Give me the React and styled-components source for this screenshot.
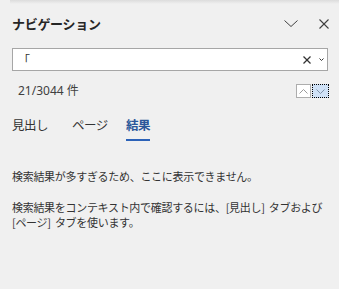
import React from "react";
import styled, { createGlobalStyle } from "styled-components";

const Global = createGlobalStyle`
  html, body { margin: 0; padding: 0; background: #f0f0f0; }
  body { font-family: "Noto Sans", "Noto Sans CJK JP", sans-serif; color: #262626; }
  * { box-sizing: border-box; }
`;

const Pane = styled.div`
  width: 339px;
  height: 289px;
  background: #f0f0f0;
  display: flex;
  flex-direction: column;
  overflow: hidden;
`;

const TopShadow = styled.div`
  height: 4px;
  margin-left: 10px;
  background: linear-gradient(#dcdcdc, #f0f0f0);
`;

const Header = styled.div`
  height: 39px;
  display: flex;
  align-items: center;
  padding: 0 10px 0 12px;
`;

const Title = styled.h1`
  margin: 0;
  flex: 1;
  font-family: "Noto Sans CJK JP", sans-serif;
  font-size: 13px;
  font-weight: 700;
  letter-spacing: -0.3px;
  color: #262626;
  line-height: 18px;
`;

const IconButton = styled.button`
  border: 0;
  background: transparent;
  padding: 0;
  margin-left: ${(p) => p.$gap || 0}px;
  display: flex;
  align-items: center;
  justify-content: center;
  color: #404040;
`;

const SearchBox = styled.div`
  margin: 5px 11px 0 12px;
  height: 23px;
  border: 1px solid #a6a6a6;
  background: #ffffff;
  display: flex;
  align-items: center;
  padding: 0 3px 0 5px;
`;

const SearchText = styled.span`
  flex: 1;
  font-family: "Noto Sans CJK JP", sans-serif;
  font-size: 12px;
  color: #333;
  line-height: 16px;
`;

const CountRow = styled.div`
  margin-top: 13px;
  height: 14px;
  display: flex;
  align-items: center;
  padding: 0 10px 0 18px;
`;

const Count = styled.span`
  flex: 1;
  font-family: "Noto Sans", "Noto Sans CJK JP", sans-serif;
  font-size: 12px;
  color: #404040;
  line-height: 14px;
`;

const StepButton = styled.button`
  width: ${(p) => p.$w}px;
  height: 14px;
  padding: 0;
  margin-left: ${(p) => p.$gap || 0}px;
  display: flex;
  align-items: center;
  justify-content: center;
  background: ${(p) => (p.$focus ? "#cfe1f6" : "#ffffff")};
  border: 1px ${(p) => (p.$focus ? "dotted #000" : "solid #adadad")};
  color: ${(p) => (p.$focus ? "#8093aa" : "#9a9a9a")};
`;

const Tabs = styled.div`
  margin-top: 18px;
  display: grid;
  grid-template-columns: 60px 54px auto;
  padding-left: 12px;
  justify-content: start;
`;

const Tab = styled.div`
  justify-self: start;
  font-family: "Noto Sans CJK JP", sans-serif;
  font-size: 12.5px;
  line-height: 18px;
  padding-bottom: 5px;
  letter-spacing: -0.5px;
  font-weight: ${(p) => (p.$active ? 700 : 400)};
  color: ${(p) => (p.$active ? "#2b579a" : "#333")};
  border-bottom: 2px solid ${(p) => (p.$active ? "#2b62b8" : "transparent")};
`;

const Message = styled.p`
  margin: ${(p) => p.$top}px 0 0 12px;
  font-family: "Noto Sans CJK JP", sans-serif;
  font-size: 11px;
  letter-spacing: -0.3px;
  word-spacing: 2px;
  line-height: 15.5px;
  color: #333;
`;

const Chevron = ({ w, h, up, stroke = "currentColor" }) => (
  <svg width={w} height={h} viewBox={`0 0 ${w} ${h}`} fill="none">
    <polyline
      points={
        up
          ? `0.5,${h - 0.5} ${w / 2},0.5 ${w - 0.5},${h - 0.5}`
          : `0.5,0.5 ${w / 2},${h - 0.5} ${w - 0.5},0.5`
      }
      stroke={stroke}
      strokeWidth="1"
    />
  </svg>
);

const Cross = ({ s, color = "currentColor", width = 1.1 }) => (
  <svg width={s} height={s} viewBox={`0 0 ${s} ${s}`} fill="none">
    <line x1="0.5" y1="0.5" x2={s - 0.5} y2={s - 0.5} stroke={color} strokeWidth={width} />
    <line x1={s - 0.5} y1="0.5" x2="0.5" y2={s - 0.5} stroke={color} strokeWidth={width} />
  </svg>
);

export default function App() {
  return (
    <>
      <Global />
      <Pane>
        <TopShadow />
        <Header>
          <Title>ナビゲーション</Title>
          <IconButton aria-label="オプション">
            <Chevron w={14} h={7} />
          </IconButton>
          <IconButton $gap={21} aria-label="閉じる">
            <Cross s={10} />
          </IconButton>
        </Header>
        <SearchBox>
          <SearchText>「</SearchText>
          <IconButton aria-label="クリア">
            <Cross s={8} color="#333" width={1.3} />
          </IconButton>
          <IconButton $gap={8} aria-label="履歴">
            <Chevron w={5} h={3} stroke="#333" />
          </IconButton>
        </SearchBox>
        <CountRow>
          <Count>21/3044 件</Count>
          <StepButton $w={15} aria-label="前へ">
            <Chevron w={9} h={5} up />
          </StepButton>
          <StepButton $w={17} $gap={1} $focus aria-label="次へ">
            <Chevron w={9} h={5} />
          </StepButton>
        </CountRow>
        <Tabs>
          <Tab>見出し</Tab>
          <Tab>ページ</Tab>
          <Tab $active>結果</Tab>
        </Tabs>
        <Message $top={28}>検索結果が多すぎるため、ここに表示できません。</Message>
        <Message $top={15}>
          検索結果をコンテキスト内で確認するには、[見出し] タブおよび
          <br />
          [ページ] タブを使います。
        </Message>
      </Pane>
    </>
  );
}
